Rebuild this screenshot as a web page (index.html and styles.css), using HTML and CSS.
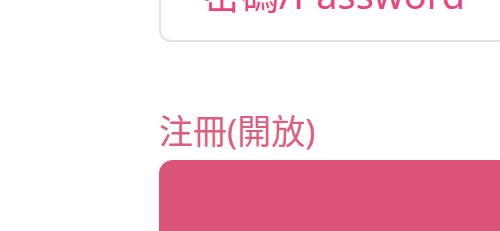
FILE: index.html
```html
<!DOCTYPE html>
<html lang="zh-Hant">
<head>
    <meta charset="UTF-8">
    <title>登入</title>
    <link rel="stylesheet" href="styles.css">
</head>
<body>
<div class="container">
    <!-- Campo de contraseña -->
    <div class="form-group">
        <input type="password" class="input-pass" placeholder="密碼/Password">
    </div>

    <!-- Registro -->
    <div class="register-label">注冊(開放)</div>
    <button class="btn-register"></button>
</div>
</body>
</html>
```

FILE: styles.css
```css
/* General */
body {
    font-family: "Noto Sans", "Noto Sans CJK TC", sans-serif;
    background-color: #fff;
    margin: 0;
    overflow: hidden;
}

/* Contenedor principal */
.container {
    margin-left: 159px;
    margin-top: -38px;
    width: 420px;
}

.input-pass {
    display: block;
    width: 100%;
    height: 80px;
    padding: 0 0 16px 42px;
    border: 2px solid #e4e4e4;
    border-radius: 12px;
    box-sizing: border-box;
    font-family: inherit;
    font-size: 38px;
    color: #e6457d;
    outline: none;
}

.input-pass::placeholder {
    color: #e6457d;
}

/* Etiqueta de registro */
.register-label {
    margin-top: 69px;
    font-size: 34px;
    line-height: 40px;
    color: #dc5e80;
}

.btn-register {
    display: block;
    width: 100%;
    height: 100px;
    margin-top: 9px;
    background-color: #da5379;
    border: none;
    border-radius: 14px;
    cursor: pointer;
}
```
